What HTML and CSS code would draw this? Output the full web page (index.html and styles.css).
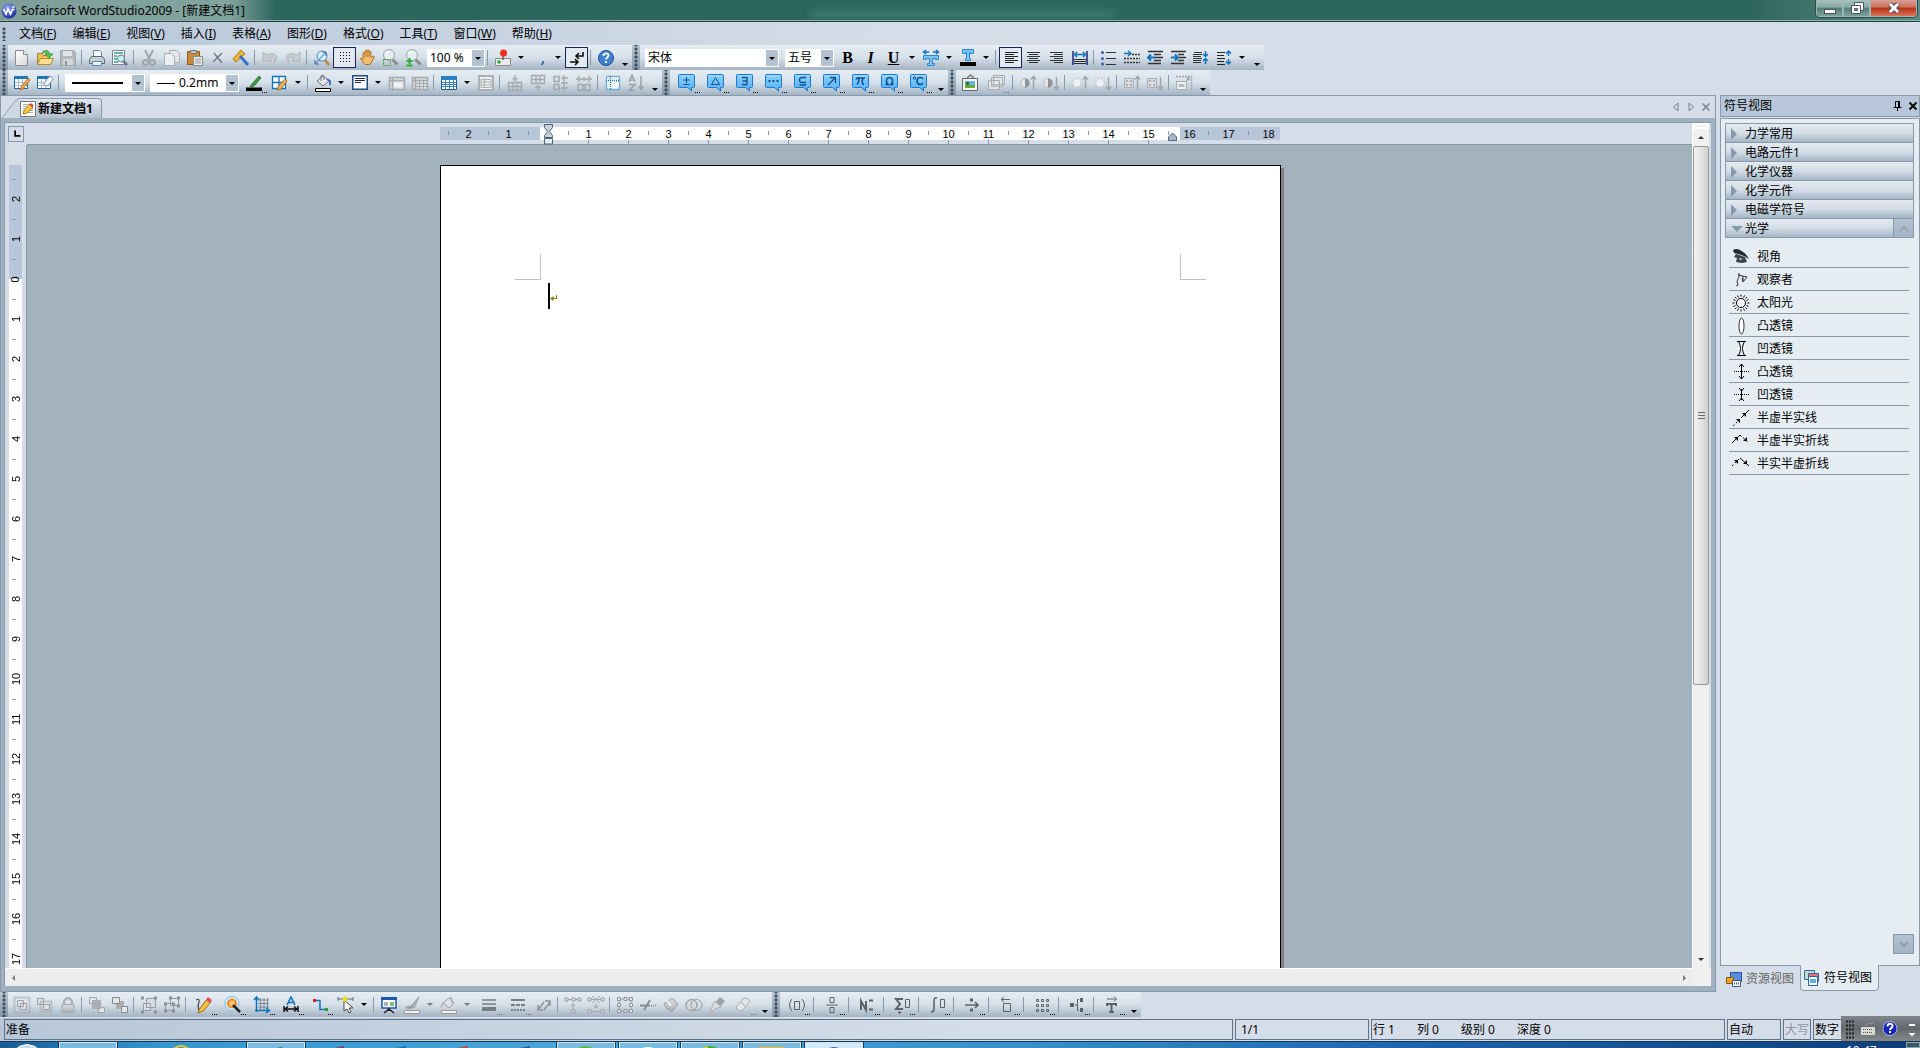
FILE: index.html
```html
<!DOCTYPE html>
<html lang="zh-CN">
<head>
<meta charset="utf-8">
<title>Sofairsoft WordStudio2009 - [新建文档1]</title>
<link rel="stylesheet" href="styles.css">
</head>
<body>
<svg class="sprite" aria-hidden="true">
  <defs>
    <linearGradient id="g-blue" x1="0" y1="0" x2="0" y2="1"><stop offset="0" stop-color="#8ad0fd"/><stop offset="1" stop-color="#55b0f6"/></linearGradient>
    <linearGradient id="g-paper" x1="0" y1="0" x2="1" y2="1"><stop offset="0" stop-color="#fff"/><stop offset="1" stop-color="#d9d9d9"/></linearGradient>
    <linearGradient id="g-gray" x1="0" y1="0" x2="0" y2="1"><stop offset="0" stop-color="#dcdfe2"/><stop offset="1" stop-color="#a9aeb3"/></linearGradient>
    <radialGradient id="g-orb" cx=".4" cy=".3" r=".7"><stop offset="0" stop-color="#9aaef0"/><stop offset="1" stop-color="#1c2c9c"/></radialGradient>
  </defs>
  <symbol id="callout" viewBox="0 0 18 18"><path d="M1.500.500h14a1 1 0 0 1 1 1v11a1 1 0 0 1-1 1h-2v3.500l-4-3.500h-8a1 1 0 0 1-1-1v-11a1 1 0 0 1 1-1z" fill="url(#g-blue)" stroke="#1f78d0"/><path d="M2 2h13" stroke="#a5dafd"/></symbol>
  <symbol id="lens" viewBox="0 0 18 18"><path d="M10.500 10.500l5 5" stroke="#8a8a8a" stroke-width="3"/><circle cx="7" cy="6" r="5.500" fill="#e4eef2" stroke="#9aa4aa"/><path d="M4 5a3 3 0 0 1 3-2.500" stroke="#fff" stroke-width="1.500"/></symbol>
  <symbol id="gsheet" viewBox="0 0 18 18"><path d="M1.500 3.500h15v12h-15zM1.500 6.500h15M4.500 3.500v12" fill="#dfe2e4" stroke="#a4a9ad" stroke-width="1.500"/></symbol>
  <symbol id="sheet" viewBox="0 0 18 18"><path d="M1.500 2.500h13v12h-13z" fill="#fff" stroke="#1d6a9e"/><path d="M1 2h14v3H1z" fill="#1d78b4"/><path d="M2 8.500h12M2 11.500h12M5.500 5v9M9.500 5v9" stroke="#a7bfd4"/></symbol>
  <symbol id="updn-up" viewBox="0 0 18 18"><path d="M14.500 15V3M12 5.500l2.500-3 2.500 3" stroke="#9ea5ab" stroke-width="1.500"/></symbol>
  <symbol id="updn-dn" viewBox="0 0 18 18"><path d="M14.500 3v12M12 12.500l2.500 3 2.500-3" stroke="#9ea5ab" stroke-width="1.500"/></symbol>
</svg>

<header class="titlebar">
  <svg class="logo" viewBox="0 0 16 16"><circle cx="8" cy="8" r="7.500" fill="url(#g-orb)"/><path d="M2.500 6l2.500 5 2-5 2.500 5 2-5M11 4h2.500M11 6.500h2.500" stroke="#fff" stroke-width="1.600"/></svg>
  <h1>Sofairsoft WordStudio2009 - [新建文档1]</h1>
  <div class="haze"></div>
  <div class="winbtns">
    <button aria-label="最小化"><svg viewBox="0 0 18 14"><rect x="3.500" y="8.500" width="11" height="4" fill="#fff" stroke="#4a5560"/></svg></button>
    <button aria-label="还原"><svg viewBox="0 0 18 14"><path d="M6.500 1.500h9v8h-9z" fill="#fff" stroke="#4a5560"/><path d="M3.500 4.500h9v8h-9z" fill="#fff" stroke="#4a5560"/><path d="M6.500 7.500h3v2h-3z" fill="#8aa" stroke="#4a5560"/></svg></button>
    <button class="close" aria-label="关闭"><svg viewBox="0 0 18 14"><path d="M5 3l8 8M13 3l-8 8" stroke="#4a4a55" stroke-width="5"/><path d="M5 3l8 8M13 3l-8 8" stroke="#fff" stroke-width="3"/></svg></button>
  </div>
</header>

<nav class="menubar">
  <i class="grip"></i>
  <a href="#">文档(<u>F</u>)</a><a href="#">编辑(<u>E</u>)</a><a href="#">视图(<u>V</u>)</a><a href="#">插入(<u>I</u>)</a><a href="#">表格(<u>A</u>)</a><a href="#">图形(<u>D</u>)</a><a href="#">格式(<u>O</u>)</a><a href="#">工具(<u>T</u>)</a><a href="#">窗口(<u>W</u>)</a><a href="#">帮助(<u>H</u>)</a>
</nav>

<div class="toolrow">
  <div class="bar"><i class="grip"></i>
    <button aria-label="新建"><svg viewBox="0 0 18 18"><path d="M2.500 1.500h8l4 4v11h-12z" fill="url(#g-paper)" stroke="#8b8b8b"/><path d="M10.500 1.500v4h4" fill="#eee" stroke="#8b8b8b"/></svg></button>
    <button aria-label="打开"><svg viewBox="0 0 18 18"><path d="M1.500 15.500v-11h5l1 2h6v9z" fill="#e9bd5a" stroke="#a87f28"/><path d="M1.500 15.500l3-6h13l-3 6z" fill="#fbe093" stroke="#b88c30"/><path d="M6 4c2-4 7-3 8 1h3l-4 4-4-4h2c-1-2-3-2-5-1z" fill="#5cc04a" stroke="#2f8f2c" stroke-width=".7"/></svg></button>
    <button aria-label="保存"><svg viewBox="0 0 18 18"><path d="M1.500 1.500h13l2 2v13h-15z" fill="#b4b8bb" stroke="#a2a6a9"/><path d="M4 2h9v5H4z" fill="#e2e4e6"/><path d="M4 10h10v6H4z" fill="#d5d8da"/><path d="M6 12h2v4H6z" fill="#8e9295"/></svg></button>
    <i class="sep"></i>
    <button aria-label="打印"><svg viewBox="0 0 18 18"><path d="M5.500 1.500h6l2 2v6h-8z" fill="#fff" stroke="#5a87c0"/><path d="M3.500 7.500h11l2 3v4h-15v-4z" fill="#c9ced3" stroke="#5e6870"/><path d="M4.500 12.500h9v4h-9z" fill="#eef6ff" stroke="#5a87c0"/></svg></button>
    <button aria-label="打印预览"><svg viewBox="0 0 18 18"><path d="M1.500 1.500h12v14h-12z" fill="#fff" stroke="#7b8794"/><path d="M3 4h9M3 7h3M3 10h3M3 13h4" stroke="#2f9a94" stroke-width="1.500"/><path d="M12 12l4 4" stroke="#6c6f94" stroke-width="2.500"/><circle cx="10" cy="9.500" r="3.500" fill="#c9ecf8" stroke="#6c7a88"/></svg></button>
    <i class="sep"></i>
    <button aria-label="剪切"><svg viewBox="0 0 18 18"><path d="M5 1l5 10M13 1L8 11" stroke="#a0a5a9" stroke-width="2"/><circle cx="5.500" cy="13.500" r="2.500" stroke="#a0a5a9" stroke-width="2"/><circle cx="12.500" cy="13.500" r="2.500" stroke="#a0a5a9" stroke-width="2"/></svg></button>
    <button aria-label="复制"><svg viewBox="0 0 18 18"><path d="M6.500 1.500h7l3 3v9h-10z" fill="#e4e6e8" stroke="#abb0b4"/><path d="M1.500 4.500h7l3 3v9h-10z" fill="#eceeef" stroke="#abb0b4"/></svg></button>
    <button aria-label="粘贴"><svg viewBox="0 0 18 18"><path d="M1.500 2.500h12v13h-12z" fill="#c98a3a" stroke="#8f5d1d"/><path d="M4.500 1.500h6v3h-6z" fill="#c8c8c8" stroke="#777"/><path d="M7.500 7.500h9v9h-9z" fill="#eee" stroke="#888"/><path d="M9 10h6M9 12h6M9 14h6" stroke="#999"/></svg></button>
    <button aria-label="删除"><svg viewBox="0 0 18 18"><path d="M5 4l8 10M13 4L4 13" stroke="#777d82" stroke-width="1.500"/></svg></button>
    <button aria-label="格式刷"><svg viewBox="0 0 18 18"><path d="M1 10L9 1l4 4-9 8z" fill="#f0b53a" stroke="#b37a10"/><path d="M8 7l8 9" stroke="#3c6fc4" stroke-width="3"/></svg></button>
    <i class="sep"></i>
    <button aria-label="撤销"><svg viewBox="0 0 18 18"><path d="M2 3v9h9l-3-3c3-2 6-1 5 5 6-6 1-12-8-8z" fill="#c8ccce" stroke="#b0b4b7"/></svg></button>
    <button aria-label="重做"><svg viewBox="0 0 18 18"><path d="M16 3v9H7l3-3c-3-2-6-1-5 5-6-6-1-12 8-8z" fill="#c8ccce" stroke="#b0b4b7"/></svg></button>
    <i class="sep"></i>
    <button aria-label="绘图"><svg viewBox="0 0 18 18"><circle cx="9" cy="7" r="5" fill="#d5ecfa" stroke="#4d8cc4"/><path d="M2 15L13 3M13 3h-4M13 3v4M2 15h4M2 15v-4" stroke="#2e6da4"/><path d="M12 11l4 5" stroke="#c58033" stroke-width="2.500"/></svg></button>
    <button class="on" aria-label="网格"><svg viewBox="0 0 18 18"><path d="M4 3.500h11M4 6.500h11M4 9.500h11M4 12.500h11" stroke="#111" stroke-dasharray="1 2"/></svg></button>
    <button aria-label="平移"><svg viewBox="0 0 18 18"><path d="M4 10V4q1-1.500 2 0V2q1-1.500 2 0V1.500q1-1.500 2 0V3q1-1.500 2 0v6l2-2q2 0 1 2l-4 6.500H6L1.500 10q0-2 2.500 0z" fill="#f5bd6b" stroke="#b0702a"/><path d="M6 4v4M8 2v6M10 3v5" stroke="#b0702a"/></svg></button>
    <button aria-label="框选缩放"><svg viewBox="0 0 18 18"><use href="#lens"/><path d="M1.500 10.500h7v6h-7z" stroke="#3f9a3f" stroke-dasharray="2 1"/></svg></button>
    <button aria-label="缩放"><svg viewBox="0 0 18 18"><use href="#lens"/><path d="M4.500 9v6M1.500 12h6M1.500 16.500h6" stroke="#2fae2f" stroke-width="2"/></svg></button>
    <label class="combo zoom"><select aria-label="缩放比例"><option>100 %</option></select></label>
    <i class="sep"></i>
    <button aria-label="图章"><svg viewBox="0 0 18 18"><path d="M1.500 9.500h15v7h-15z" fill="#ececec" stroke="#8b8b8b"/><path d="M9 7v4" stroke="#777" stroke-width="2"/><circle cx="9.500" cy="4" r="3.500" fill="#ee2d1c"/><path d="M3 13h4M5 11v4" stroke="#3aa63a" stroke-width="1.500"/></svg></button>
    <button class="drop" aria-label="图章选项"></button>
    <button aria-label="标点"><svg viewBox="0 0 18 18"><path d="M12 12v2l-1.500 2" stroke="#1b5f9c" stroke-width="1.500"/></svg></button>
    <button class="drop" aria-label="标点选项"></button>
    <button class="on" aria-label="显示段落标记"><svg viewBox="0 0 18 18"><path d="M15 3v4H8M11 4L8 7l3 3M2 13h7M7 10l3 3-3 3" stroke="#111" stroke-width="1.600"/></svg></button>
    <i class="sep"></i>
    <button aria-label="帮助"><svg viewBox="0 0 18 18"><circle cx="9" cy="9" r="7.500" fill="#3f7fd0" stroke="#205298"/><path d="M6.500 7c0-3.500 5-3.500 5-.500 0 2-2.500 2-2.500 4M9 12v2" stroke="#fff" stroke-width="1.800"/></svg></button>
    <button class="more" aria-label="工具栏选项"></button>
  </div>
  <div class="bar"><i class="grip"></i>
    <label class="combo font"><select aria-label="字体"><option>宋体</option></select></label>
    <label class="combo size"><select aria-label="字号"><option>五号</option></select></label>
    <button class="glyph" aria-label="加粗"><b>B</b></button>
    <button class="glyph" aria-label="倾斜"><b><em>I</em></b></button>
    <button class="glyph" aria-label="下划线"><b><u>U</u></b></button>
    <button class="drop" aria-label="下划线选项"></button>
    <button class="wide" aria-label="字符宽度"><svg viewBox="0 0 18 18"><path d="M1 3h6M11 3h6M4 1L1.500 3 4 5M14 1l2.500 2L14 5" stroke="#1173bd" stroke-width="1.500"/><path d="M1.500 6.500h15v4h-3v-1h-3v5h2v2h-7v-2h2v-5h-3v1h-3z" fill="#7cc4f4" stroke="#2d87cf"/></svg></button>
    <button class="drop" aria-label="字符宽度选项"></button>
    <button aria-label="字体颜色"><svg viewBox="0 0 18 18"><path d="M3.500.500h11v4h-3v-1h-1v6h1v2h-5v-2h1v-6h-1v1h-3z" fill="#7cc4f4" stroke="#2d87cf"/><path d="M1 13h16v4H1z" fill="#000"/></svg></button>
    <button class="drop" aria-label="颜色选项"></button>
    <i class="sep"></i>
    <button class="on" aria-label="左对齐"><svg viewBox="0 0 18 18"><path d="M3 3.500h13M3 5.500h9M3 7.500h13M3 9.500h9M3 11.500h13M3 13.500h9" stroke="#222"/></svg></button>
    <button aria-label="居中"><svg viewBox="0 0 18 18"><path d="M2 3.500h13M4 5.500h9M2 7.500h13M4 9.500h9M2 11.500h13M4 13.500h9" stroke="#333"/></svg></button>
    <button aria-label="右对齐"><svg viewBox="0 0 18 18"><path d="M2 3.500h13M6 5.500h9M2 7.500h13M6 9.500h9M2 11.500h13M6 13.500h9" stroke="#333"/></svg></button>
    <button aria-label="分散对齐"><svg viewBox="0 0 18 18"><path d="M2 2v14M16 2v14" stroke="#1b2a80" stroke-width="1.500"/><path d="M3 5.500h12M6 3L3.500 5.500 6 8M12 3l2.500 2.500L12 8" stroke="#1173bd" stroke-width="1.500"/><path d="M3 10.500h12M3 12.500h12M3 14.500h12" stroke="#333"/></svg></button>
    <i class="sep"></i>
    <button aria-label="项目符号"><svg viewBox="0 0 18 18"><path d="M6 3.500h10M6 9.500h10M6 15.500h10" stroke="#333"/><g fill="#3d5ba9"><circle cx="2.500" cy="3.500" r="1.500"/><circle cx="2.500" cy="9.500" r="1.500"/><circle cx="2.500" cy="15" r="1.500"/></g></svg></button>
    <button aria-label="首行缩进"><svg viewBox="0 0 18 18"><path d="M1 4.500h7M5 2l3 2.500L5 7" stroke="#1173bd" stroke-width="1.500"/><path d="M9 5.500h8M1 9.500h16M1 13.500h16" stroke="#333" stroke-width="1.500" stroke-dasharray="2 1"/></svg></button>
    <button aria-label="减少缩进"><svg viewBox="0 0 18 18"><path d="M2 2.500h15M8 5.500h7M9 8.500h8M8 11.500h7M2 14.500h13" stroke="#333" stroke-width="1.300"/><path d="M2 8.500h7M5 5.500l-3 3 3 3" stroke="#1173bd" stroke-width="2"/></svg></button>
    <button aria-label="增加缩进"><svg viewBox="0 0 18 18"><path d="M2 2.500h15M9 5.500h6M10 8.500h7M9 11.500h6M2 14.500h13" stroke="#333" stroke-width="1.300"/><path d="M2 8.500h7M6 5.500l3 3-3 3" stroke="#1173bd" stroke-width="2"/></svg></button>
    <button aria-label="段前距"><svg viewBox="0 0 18 18"><path d="M2 3.500h8M1 5.500h9M1 7.500h8M1 9.500h9M1 11.500h8M1 13.500h8" stroke="#333"/><path d="M13.500 2v5M11 5l2.500 2.500L16 5M13.500 15v-5M11 12l2.500-2.500L16 12" stroke="#1173bd" stroke-width="1.500"/></svg></button>
    <button aria-label="行距"><svg viewBox="0 0 18 18"><path d="M2 3.500h8M2 6.500h7M2 9.500h8M2 12.500h7M2 15.500h8" stroke="#222"/><path d="M13.500 7V2M11 4.500L13.500 2 16 4.500M13.500 10v5M11 12.500l2.500 2.500 2.500-2.500" stroke="#1173bd" stroke-width="1.500"/></svg></button>
    <button class="drop" aria-label="行距选项"></button>
    <button class="more" aria-label="工具栏选项"></button>
  </div>
</div>

<div class="toolrow second">
  <div class="bar"><i class="grip"></i>
    <button aria-label="绘制表格"><svg viewBox="0 0 18 18"><use href="#sheet"/><path d="M8 13l7-9 2 2-7 9-3 1z" fill="#f6a948" stroke="#a85b19" stroke-width=".8"/></svg></button>
    <button aria-label="擦除表格"><svg viewBox="0 0 18 18"><use href="#sheet"/><path d="M8 9l6-7 3.500 3-6 7q-4 0-3.500-3z" fill="#eef1f8" stroke="#7f8db0"/></svg></button>
    <i class="sep"></i>
    <label class="combo line"><select aria-label="线型"><option></option></select></label>
    <label class="combo weight"><select aria-label="线宽"><option>0.2mm</option></select></label>
    <button class="dots" aria-label="线条颜色"><svg viewBox="0 0 18 18"><path d="M7 10l7-8 2 2-7 8-4 1z" fill="#3da040" stroke="#235e25" stroke-width=".8"/><path d="M1 13.500h16v3.500H1z" fill="#000"/></svg></button>
    <button aria-label="边框"><svg viewBox="0 0 18 18"><path d="M1.500 2.500h13v12h-13zM8 2v12M2 8.500h12" fill="#fff" stroke="#1173bd" stroke-width="1.300"/><path d="M7 13l7-8 2 2-6 8-4 1z" fill="#f4b04c" stroke="#a85b19" stroke-width=".8"/></svg></button>
    <button class="drop" aria-label="边框选项"></button>
    <i class="sep"></i>
    <button aria-label="填充颜色"><svg viewBox="0 0 18 18"><path d="M3 7l6-5 6 5-6 5z" fill="#e6e9ec" stroke="#6e757c"/><path d="M7 7V2q1.500-2 3 0v4" stroke="#6e757c"/><path d="M13 5l3 2v4" stroke="#4a6fc0" stroke-width="2"/><path d="M1.500 14.500h15v3h-15z" fill="#fff" stroke="#000"/></svg></button>
    <button class="drop" aria-label="填充选项"></button>
    <button aria-label="对齐方式"><svg viewBox="0 0 18 18"><path d="M1.750 1.750h14.500v13.500H1.750z" fill="#fff" stroke="#1c4e7e" stroke-width="1.500"/><path d="M4 4.500h10M4 6.500h10M4 8.500h6" stroke="#224"/></svg></button>
    <button class="drop" aria-label="对齐选项"></button>
    <button aria-label="合并单元格"><svg viewBox="0 0 18 18"><use href="#gsheet"/><path d="M6 9h8v4H6z" fill="#f2f3f4"/></svg></button>
    <button aria-label="拆分单元格"><svg viewBox="0 0 18 18"><use href="#gsheet"/><path d="M5 9.500h11M5 12.500h11M8.500 7v8M12.500 7v8" stroke="#a4a9ad"/></svg></button>
    <i class="sep"></i>
    <button aria-label="插入表格"><svg viewBox="0 0 18 18"><path d="M1.500 2.500h15v13h-15z" fill="#fff" stroke="#1b5c9e"/><path d="M1 2h16v4H1z" fill="#2d7fc4"/><path d="M2 8.500h14M2 10.500h14M2 12.500h14M5.500 6v9M9.500 6v9M13.500 6v9" stroke="#3c80c0"/></svg></button>
    <button class="drop" aria-label="表格选项"></button>
    <button aria-label="表格属性"><svg viewBox="0 0 18 18"><path d="M2 2h14v14H2z" fill="#eceef0" stroke="#abb0b4" stroke-width="2"/><path d="M4 5.500h10v8H4zM4 8h10M4 11h10M7.500 5v8" stroke="#b0b4b8"/></svg></button>
    <i class="sep"></i>
    <button aria-label="上方插入行"><svg viewBox="0 0 18 18"><path d="M9 1v5M6.500 4L9 6.500 11.500 4M2.500 8.500h13v8h-13zM2 12.500h13M7 8v8M11 8v8" stroke="#a4a9ad" stroke-width="1.300"/></svg></button>
    <button aria-label="下方插入行"><svg viewBox="0 0 18 18"><path d="M9 17v-5M6.500 14L9 11.500l2.500 2.500M2.500 1.500h13v8h-13zM2 5.500h13M7 2v8M11 2v8" stroke="#a4a9ad" stroke-width="1.300"/></svg></button>
    <button aria-label="左侧插入列"><svg viewBox="0 0 18 18"><path d="M2 2.500h5v5H2zM2 10.500h5v5H2zM12 1v16M9 4h7M9 14h7M9 9h7" stroke="#a4a9ad" stroke-width="1.500"/></svg></button>
    <button aria-label="右侧插入列"><svg viewBox="0 0 18 18"><path d="M3 10.500h5v6H3zM10 10.500h5v6h-5zM1 5h16M4 2v6M14 2v6M9 3v4" stroke="#a4a9ad" stroke-width="1.500"/></svg></button>
    <i class="sep"></i>
    <button aria-label="虚框"><svg viewBox="0 0 18 18"><path d="M2.500 2.500h13v13h-13zM6.500 2v14M2 6.500h14" fill="#f4f9fc" stroke="#1173bd" stroke-width="1.300" stroke-dasharray="1 1"/></svg></button>
    <button aria-label="排序"><svg viewBox="0 0 18 18"><path d="M2 8l3-7 3 7M3 6h4M2 10.500h6l-6 6h6M14 2v13M11.500 12.500l2.500 3 2.500-3" stroke="#9ba0a4" stroke-width="1.500"/></svg></button>
    <button class="more" aria-label="工具栏选项"></button>
  </div>
  <div class="bar"><i class="grip"></i>
    <button class="dots" aria-label="运算符"><svg viewBox="0 0 18 18"><use href="#callout"/><path d="M8.500 3v6M5.500 6h6M5.500 10.500h6" stroke="#12508c"/></svg></button>
    <button class="dots" aria-label="几何"><svg viewBox="0 0 18 18"><use href="#callout"/><path d="M8.500 3.500l4 7h-8z" stroke="#12508c"/></svg></button>
    <button class="dots" aria-label="逻辑"><svg viewBox="0 0 18 18"><use href="#callout"/><path d="M6 3.500h5v7H6M6.500 7H11" stroke="#12508c" stroke-width="1.300"/></svg></button>
    <button class="dots" aria-label="省略"><svg viewBox="0 0 18 18"><use href="#callout"/><path d="M3.500 7h11" stroke="#12508c" stroke-width="2" stroke-dasharray="2 2"/></svg></button>
    <button class="dots" aria-label="集合"><svg viewBox="0 0 18 18"><use href="#callout"/><path d="M12 3.500H8a2.500 2.500 0 0 0 0 5h4M5.500 11H12" stroke="#12508c" stroke-width="1.300"/></svg></button>
    <button class="dots" aria-label="箭头"><svg viewBox="0 0 18 18"><use href="#callout"/><path d="M5 11l7-7M7 3.500h5.500V9" stroke="#12508c" stroke-width="1.300"/></svg></button>
    <button class="dots" aria-label="希腊字母"><svg viewBox="0 0 18 18"><use href="#callout"/><path d="M4 5.500q1-2 3-1.500h6M7 4.500q0 4-2 6M11 4q-2 6 1 6.500" stroke="#12508c" stroke-width="1.600"/></svg></button>
    <button class="dots" aria-label="单位"><svg viewBox="0 0 18 18"><use href="#callout"/><path d="M4.500 10.500h2.500c-3-3-1.500-7 1.500-7s4.500 4 1.500 7h2.500" stroke="#12508c" stroke-width="1.500"/></svg></button>
    <button class="dots" aria-label="温度"><svg viewBox="0 0 18 18"><use href="#callout"/><circle cx="4.500" cy="4" r="1.200" stroke="#12508c"/><path d="M13 5c-1-2.500-6-2-6 2s5 4.500 6 2" stroke="#12508c" stroke-width="1.500"/></svg></button>
    <button class="more" aria-label="工具栏选项"></button>
  </div>
  <div class="bar"><i class="grip"></i>
    <button aria-label="插入图片"><svg viewBox="0 0 18 18"><path d="M6 4l3.500-3L13 4" stroke="#777" stroke-width="1.500"/><path d="M1.500 4.500h15v12h-15z" fill="#f5f5f0" stroke="#666"/><path d="M4 7h10v5H4z" fill="#64b5ea"/><path d="M4 11h10v3H4z" fill="#6aa83a"/><circle cx="6.500" cy="9.500" r="1.800" fill="#2f7030"/></svg></button>
    <button class="dots off" aria-label="图片库"><svg viewBox="0 0 18 18"><path d="M6.500 1.500h11v9h-11zM4.500 3.500h11v9h-11zM1.500 6.500h11v9h-11z" fill="#e3e6e8" stroke="#a6abaf"/><path d="M4 10h6v3H4z" fill="#bbb"/></svg></button>
    <i class="sep"></i>
    <button aria-label="增加对比度"><svg viewBox="0 0 18 18"><use href="#updn-up"/><circle cx="6" cy="9" r="4.500" fill="#e4e6e8" stroke="#b5b9bc"/><path d="M6 4.500a4.500 4.500 0 0 1 0 9z" fill="#8f9498"/></svg></button>
    <button aria-label="降低对比度"><svg viewBox="0 0 18 18"><use href="#updn-dn"/><circle cx="6" cy="9" r="4.500" fill="#e4e6e8" stroke="#b5b9bc"/><path d="M6 4.500a4.500 4.500 0 0 1 0 9z" fill="#8f9498"/></svg></button>
    <i class="sep"></i>
    <button aria-label="增加亮度"><svg viewBox="0 0 18 18"><use href="#updn-up"/><circle cx="6" cy="9" r="5" stroke="#c2c8cc" stroke-width="2" stroke-dasharray="1 2"/><circle cx="6" cy="9" r="3.500" fill="#f0f1f2"/></svg></button>
    <button aria-label="降低亮度"><svg viewBox="0 0 18 18"><use href="#updn-dn"/><circle cx="6" cy="9" r="5" stroke="#c2c8cc" stroke-width="2" stroke-dasharray="1 2"/><circle cx="6" cy="9" r="3.500" fill="#f0f1f2"/></svg></button>
    <i class="sep"></i>
    <button aria-label="增加透明度"><svg viewBox="0 0 18 18"><use href="#updn-up"/><path d="M1.500 4.500h9v9h-9z" fill="#dcdfe1" stroke="#a9aeb2"/><path d="M3 7h7M3 11h7" stroke="#a9aeb2" stroke-width="2" stroke-dasharray="2 2"/></svg></button>
    <button aria-label="降低透明度"><svg viewBox="0 0 18 18"><use href="#updn-dn"/><path d="M1.500 4.500h9v9h-9z" fill="#dcdfe1" stroke="#a9aeb2"/><path d="M3 7h7M3 11h7" stroke="#a9aeb2" stroke-width="2" stroke-dasharray="2 2"/></svg></button>
    <i class="sep"></i>
    <button aria-label="调整大小"><svg viewBox="0 0 18 18"><path d="M1 2.500h15.500V16" stroke="#a0a5a9" stroke-width="1.500" stroke-dasharray="2 1"/><path d="M1.500 7.500h10v8h-10z" fill="#f0f1f2" stroke="#a6abaf"/><path d="M3.500 10h6v3h-6z" fill="#bbb"/><path d="M11 7l3-3M11.500 4H14v2.500" stroke="#8d9296"/></svg></button>
    <button class="more" aria-label="工具栏选项"></button>
  </div>
</div>

<main class="work">
  <section class="editor">
    <div class="tabs">
      <svg class="slope" viewBox="0 0 20 22" preserveAspectRatio="none"><path d="M0 22L14 4Q17 .500 20 .500V22z" fill="#cdd8e2"/><path d="M0 22L14 4Q17 .500 20 .500" stroke="#8799ab"/></svg>
      <button class="tab"><svg viewBox="0 0 16 16"><path d="M.500.500h15v15H.500z" fill="#fff" stroke="#777"/><path d="M3 3.500h10M3 5.500h10M3 7.500h10M3 9.500h10M3 11.500h10" stroke="#aaa"/><path d="M4 10l6-7 3 3-6 6-4 1z" fill="#fbd038" stroke="#b27a10"/><path d="M9 3.500l2-1.500 2.500 2.500L12 6z" fill="#e23b3b"/></svg>新建文档1</button>
      <div class="tabnav">
        <button aria-label="上一个"><svg viewBox="0 0 10 10"><path d="M7 1v8L2.500 5z" stroke="#7a8087"/></svg></button>
        <button aria-label="下一个"><svg viewBox="0 0 10 10"><path d="M3 1v8l4.500-4z" stroke="#7a8087"/></svg></button>
        <button aria-label="关闭文档"><svg viewBox="0 0 10 10"><path d="M1.500 1.500l7 7M8.500 1.500l-7 7" stroke="#7a8087" stroke-width="1.500"/></svg></button>
      </div>
    </div>
    <div class="view">
      <div class="corner"><button aria-label="制表符"><svg viewBox="0 0 16 16"><path d="M7 4v6h6" stroke="#000" stroke-width="2"/></svg></button></div>
      <div class="hruler">
        <div class="scale">
          <div class="out left"><span>2</span><span>1</span><span></span></div>
          <div class="in"><span>1</span><span>2</span><span>3</span><span>4</span><span>5</span><span>6</span><span>7</span><span>8</span><span>9</span><span>10</span><span>11</span><span>12</span><span>13</span><span>14</span><span>15</span><span class="part"></span></div>
          <div class="out right"><span>16</span><span>17</span><span>18</span></div>
          <svg class="indent" viewBox="0 0 10 21"><path d="M.500.500h8v3l-3 4 3 4v2h-8v-2l3-4-3-4z" fill="#c3cfda" stroke="#4f6578"/><path d="M.500 14.500h8v5.500h-8z" fill="#e5edf3" stroke="#4f6578"/></svg>
          <svg class="rindent" viewBox="0 0 10 9"><path d="M.500 8.500V5l4-4 4 4v3.500z" fill="#a9b8c6" stroke="#4f6578"/></svg>
        </div>
      </div>
      <div class="vruler">
        <div class="vout"><span>2</span><span>1</span><span class="stub"></span></div>
        <div class="vin"><b>0</b><span>1</span><span>2</span><span>3</span><span>4</span><span>5</span><span>6</span><span>7</span><span>8</span><span>9</span><span>10</span><span>11</span><span>12</span><span>13</span><span>14</span><span>15</span><span>16</span><span>17</span></div>
      </div>
      <div class="canvas">
        <article class="page">
          <div class="marks"><i class="ml"></i><i class="mr"></i></div>
          <div class="para"><i class="caret"></i><svg viewBox="0 0 8 8"><path d="M6.500 0v3.500H1" stroke="#808000"/><path d="M3.500 1v5L0 3.500z" fill="#808000"/></svg></div>
        </article>
      </div>
      <div class="vscroll"><i class="split"></i><button class="up" aria-label="向上滚动"></button><div class="thumb"></div><button class="down" aria-label="向下滚动"></button></div>
      <div class="hscroll"><button class="back" aria-label="向左滚动"></button><button class="fwd" aria-label="向右滚动"></button></div>
      <div class="nook"></div>
    </div>
  </section>

  <aside class="panel">
    <header><h2>符号视图</h2>
      <button aria-label="固定"><svg viewBox="0 0 10 10"><path d="M2.500 6V.500h4V6M.500 6.500h8M4.500 7v3" stroke="#000"/><path d="M6 0v6" stroke="#000" stroke-width="2"/></svg></button>
      <button aria-label="关闭面板"><svg viewBox="0 0 10 10"><path d="M1.500 1.500l7 7M8.500 1.500l-7 7" stroke="#000" stroke-width="1.800"/></svg></button>
    </header>
    <div class="pbody">
      <div class="groups">
        <button><i></i>力学常用</button>
        <button><i></i>电路元件1</button>
        <button><i></i>化学仪器</button>
        <button><i></i>化学元件</button>
        <button><i></i>电磁学符号</button>
        <div class="openrow"><button class="open"><i></i>光学</button><button class="step" aria-label="上移"><svg viewBox="0 0 12 8"><path d="M2 6l4-4 4 4" stroke="#9aa2ab" stroke-width="2"/></svg></button></div>
      </div>
      <ul class="symbols">
        <li><svg viewBox="0 0 18 18"><path d="M1 2q3-2 7 0 6 3 9 9l-5-3-6-2-4-1z" fill="#222b33"/><path d="M4 6l9 3 2 5-5 1-6-1 1-4-3-1z" fill="#3a444c"/><path d="M7 10l4 1-3 1z" fill="#e5edf3"/></svg>视角</li>
        <li><svg viewBox="0 0 18 18"><path d="M7 2v4l-2 4 1 4-2 1M6 4l9 2-4 5-1-4M11 5v5" stroke="#333"/></svg>观察者</li>
        <li><svg viewBox="0 0 18 18"><path d="M9 .500v2M9 15.500v2M.500 9h2M15.500 9h2M3 3l1.500 1.500M13.500 13.500L15 15M15 3l-1.500 1.500M4.500 13.500L3 15M5.500 1.500l1 2M12.500 1.500l-1 2M5.500 16.500l1-2M12.500 16.500l-1-2M1.500 5.500l2 1M16.500 5.500l-2 1M1.500 12.500l2-1M16.500 12.500l-2-1" stroke="#000"/><circle cx="9" cy="9" r="4.500" fill="#fff" stroke="#000"/></svg>太阳光</li>
        <li><svg viewBox="0 0 18 18"><ellipse cx="9.500" cy="9" rx="2.500" ry="8" fill="#fff" stroke="#333"/></svg>凸透镜</li>
        <li><svg viewBox="0 0 18 18"><path d="M5 1.500h9M5 15.500h9M6.500 1.500q4 7 0 14M12.500 1.500q-4 7 0 14" fill="#fff" stroke="#000"/></svg>凹透镜</li>
        <li><svg viewBox="0 0 18 18"><path d="M9.500 1v15M7 4l2.500-3L12 4M7 13l2.500 3 2.500-3" stroke="#000"/><path d="M2 8.500h15" stroke="#000" stroke-dasharray="1 1"/></svg>凸透镜</li>
        <li><svg viewBox="0 0 18 18"><path d="M9.500 3v11M7 2l2.500 3L12 2M7 15l2.500-3 2.500 3" stroke="#000"/><path d="M2 8.500h15" stroke="#000" stroke-dasharray="1 1"/></svg>凹透镜</li>
        <li><svg viewBox="0 0 18 18"><path d="M9 9l8-8" stroke="#000"/><path d="M1 17l8-8" stroke="#000" stroke-dasharray="2 2"/><path d="M10 4h4v4zM4 10h4v4z" fill="#000"/></svg>半虚半实线</li>
        <li><svg viewBox="0 0 18 18"><path d="M0 11l8-8" stroke="#000"/><path d="M8 3l9 8" stroke="#000" stroke-dasharray="2 2"/><path d="M2 5h4v4zM11 9h4V5z" fill="#000"/></svg>半虚半实折线</li>
        <li><svg viewBox="0 0 18 18"><path d="M0 11l8-8" stroke="#000" stroke-dasharray="2 2"/><path d="M8 3l9 8" stroke="#000"/><path d="M2 5h4v4zM11 9h4V5z" fill="#000"/></svg>半实半虚折线</li>
      </ul>
      <button class="step last" aria-label="下移"><svg viewBox="0 0 12 8"><path d="M2 2l4 4 4-4" stroke="#8f9ba7" stroke-width="2"/></svg></button>
    </div>
    <div class="ptabs">
      <button><svg viewBox="0 0 16 16"><path d="M4.500 1.500h11v9h-11z" fill="#5b8de0" stroke="#2b4f9a"/><path d="M.500 6.500h7v6h-7z" fill="#e9a51c" stroke="#8c5a10"/><path d="M6.500 9.500h8v6h-8z" fill="#fff" stroke="#44597c"/><path d="M8 12.500h6" stroke="#44597c" stroke-width="2" stroke-dasharray="1 1"/></svg>资源视图</button>
      <button class="sel"><svg viewBox="0 0 16 16"><path d="M.500.500h10v9H.500z" fill="#b9e0c0" stroke="#3a66a8"/><path d="M4.500 3.500h10v8h-10z" fill="#e67070" stroke="#3a66a8"/><path d="M4.500 6.500h9v9h-9z" fill="#fff" stroke="#2c5fa4"/><path d="M6 9h6v4H6z" fill="#5ab0e4"/></svg>符号视图</button>
    </div>
  </aside>
</main>

<div class="toolrow low">
  <div class="bar"><i class="grip"></i>
    <button aria-label="全选"><svg viewBox="0 0 18 18"><path d="M1.500 1.500h15v15h-15z" stroke="#a0a6ab" stroke-width="2" stroke-dasharray="1 1"/><path d="M4.500 4.500h6v6h-6zM7.500 7.500h6v6h-6z" fill="#dfe3e6" stroke="#9ba1a6"/></svg></button>
    <button aria-label="选择"><svg viewBox="0 0 18 18"><path d="M1.500 2.500h6v6h-6z" fill="#dfe3e6" stroke="#9ba1a6"/><path d="M4.500 5.500h11v10h-11z" stroke="#a0a6ab" stroke-width="2" stroke-dasharray="1 1"/><path d="M7.500 8.500h6v5h-6z" fill="#dfe3e6" stroke="#9ba1a6"/></svg></button>
    <button aria-label="锁定"><svg viewBox="0 0 18 18"><path d="M5 9V5q4-6 8 0v4" stroke="#a5abb0" stroke-width="2"/><path d="M3 8.500h12v8H3z" fill="url(#g-gray)" stroke="#a5abb0"/></svg></button>
    <i class="sep"></i>
    <button aria-label="置于顶层"><svg viewBox="0 0 18 18"><path d="M1.500 1.500h7v6h-7zM10.500 11.500h6v5h-6z" fill="#e3e6e8" stroke="#a0a6ab"/><path d="M4 4h9v9H4z" fill="#a9aeb3"/></svg></button>
    <button aria-label="置于底层"><svg viewBox="0 0 18 18"><path d="M5 5h8v8H5z" fill="#a9aeb3"/><path d="M1.500 1.500h7v6h-7zM10.500 10.500h6v6h-6z" fill="#e3e6e8" stroke="#858b90"/></svg></button>
    <i class="sep"></i>
    <button aria-label="组合"><svg viewBox="0 0 18 18"><path d="M6.500 2.500h9v9h-9zM3.500 7.500h7v7h-7z" fill="#d8dde1" stroke="#959ba0"/><path d="M1 2h3M1 16h3M14 16h3M14 2h3" stroke="#8b9196" stroke-width="3"/></svg></button>
    <button aria-label="取消组合"><svg viewBox="0 0 18 18"><path d="M7.500 2.500h8v7h-8zM2.500 7.500h8v7h-8z" stroke="#959ba0"/><path d="M6 2h3M14 2h3M1 8h3M9 8h3M14 10h3M1 15h3M9 15h3" stroke="#8b9196" stroke-width="3"/></svg></button>
    <i class="sep"></i>
    <button class="dots" aria-label="画笔"><svg viewBox="0 0 18 18"><path d="M1 4q4-2 3 2-2 4 0 8" stroke="#222"/><path d="M4 14l8-11 4 3-8 9-5 2z" fill="#f9c63c" stroke="#9a6410"/><path d="M11 4l2-3 4 3-2 3z" fill="#e2505c"/></svg></button>
    <button class="dots" aria-label="智能绘图"><svg viewBox="0 0 18 18"><circle cx="8" cy="7.500" r="7" fill="#dbeffb" stroke="#79bce6"/><circle cx="8" cy="7.500" r="4" fill="#ffc870" stroke="#ee8a1d" stroke-width="2"/><path d="M9 9l7 7" stroke="#222" stroke-width="2.500"/></svg></button>
    <button class="dots" aria-label="坐标"><svg viewBox="0 0 18 18"><path d="M5 4h11M5 7.500h11M5 11h11M7.500 2v12M11 2v12M14.500 2v12" stroke="#7d858d"/><path d="M3.500 16V2M1 4l2.500-3L6 4M2 14.500h14M13 12l3.500 2.500L13 17" stroke="#1173bd" stroke-width="1.500"/></svg></button>
    <button class="dots" aria-label="标注"><svg viewBox="0 0 18 18"><path d="M5 9l4-8 4 8M6 6.500h6" stroke="#1173bd" stroke-width="1.600"/><path d="M2 10v6M16 10v6M3 13h12M6 10.500L3 13l3 2.500M12 10.500l3 2.500-3 2.500" stroke="#111" stroke-width="1.500"/></svg></button>
    <button class="dots" aria-label="连线"><svg viewBox="0 0 18 18"><path d="M4 4.500h5v9h6" stroke="#1173bd" stroke-width="1.500"/><path d="M2 3h3v3H2z" fill="#d8201c"/><path d="M14 12h3v3h-3z" fill="#2a9a2e"/></svg></button>
    <button class="pick" aria-label="选取"><svg viewBox="0 0 18 18"><path d="M1 3h15M1 1v4M16 1v4" stroke="#667"/><path d="M7 4v11l3-2 2 4 2-1-2-4h4z" fill="#fff" stroke="#444"/><circle cx="8" cy="3" r="2.500" fill="#e6e610"/></svg></button>
    <button class="drop" aria-label="选取选项"></button>
    <i class="sep"></i>
    <button aria-label="演示"><svg viewBox="0 0 18 18"><path d="M2 2h14v10H2z" fill="#fff" stroke="#1c55b4" stroke-width="1.500"/><path d="M1 1h16v3H1z" fill="#1c55b4"/><path d="M4 7h4M4 9h4" stroke="#666"/><path d="M10 6h4v4h-4z" fill="#78c470"/><path d="M9 12v3M9 13l-5 4M9 13l5 4" stroke="#222" stroke-width="1.600"/></svg></button>
    <button aria-label="线条颜色"><svg viewBox="0 0 18 18"><path d="M8 10l8-9-5 11z" fill="#aab0b5" stroke="#979da2"/><path d="M2 12q2-3 6-2l2 2q-3 2-8 0z" fill="#9aa0a5"/><path d="M1.500 14.500h15v3h-15z" fill="#f7efe9" stroke="#999"/></svg></button>
    <button class="drop off" aria-label="线条选项"></button>
    <button aria-label="填充颜色"><svg viewBox="0 0 18 18"><path d="M3 7l6-5 5 5-5 5z" fill="#dee2e5" stroke="#9aa0a5"/><path d="M9 3q3-5 3 4M3 7l-2 4" stroke="#9aa0a5"/><path d="M1.500 14.500h15v3h-15z" fill="#f7efe9" stroke="#999"/></svg></button>
    <button class="drop off" aria-label="填充选项"></button>
    <button class="dots off" aria-label="线宽"><svg viewBox="0 0 18 18"><path d="M2 4h14M2 8h14" stroke="#777d82" stroke-width="1.500"/><path d="M2 13h14" stroke="#777d82" stroke-width="4"/></svg></button>
    <button class="dots off" aria-label="线型"><svg viewBox="0 0 18 18"><path d="M2 4h14" stroke="#777d82" stroke-width="2"/><path d="M2 9h14" stroke="#777d82" stroke-width="2" stroke-dasharray="4 1"/><path d="M2 14h14" stroke="#777d82" stroke-width="2" stroke-dasharray="2 1"/></svg></button>
    <button aria-label="箭头样式"><svg viewBox="0 0 18 18"><path d="M3 14l6-8M3 9v5h5M9 14l6-8M10 5h5v5" stroke="#8b9196" stroke-width="1.500"/></svg></button>
    <i class="sep"></i>
    <button aria-label="添加节点"><svg viewBox="0 0 18 18"><path d="M2 3.500h14M9 15V8M6.500 10L9 7.500l2.500 2.500" stroke="#a0a6ab"/><path d="M1 2h3v3H1zM8 2h3v3H8zM14 2h3v3h-3zM8 14h3v3H8z" fill="#e5e9ec" stroke="#999"/></svg></button>
    <button aria-label="删除节点"><svg viewBox="0 0 18 18"><path d="M2 3.500h14M5 0l8 7M13 0L5 7M9 7v5M6.500 9.500L9 12l2.500-2.500M2 15.500h14" stroke="#a0a6ab"/><path d="M1 2h3v3H1zM14 2h3v3h-3zM1 14h3v3H1zM14 14h3v3h-3z" fill="#e5e9ec" stroke="#999"/></svg></button>
    <i class="sep"></i>
    <button aria-label="编辑顶点"><svg viewBox="0 0 18 18"><path d="M3 3h12v12H3z" stroke="#a0a6ab"/><path d="M1.500 1.500h3v3h-3zM8 1.500h3v3H8zM13.500 1.500h3v3h-3zM1.500 7.500h3v3h-3zM13.500 7.500h3v3h-3zM1.500 13.500h3v3h-3zM8 13.500h3v3H8zM13.500 13.500h3v3h-3z" fill="#e5e9ec" stroke="#8f959a"/></svg></button>
    <button aria-label="断开"><svg viewBox="0 0 18 18"><path d="M1 9.500h10M5 14l6-10" stroke="#858b90" stroke-width="1.800"/><path d="M12 9.500h6" stroke="#858b90" stroke-width="1.500" stroke-dasharray="1 1"/></svg></button>
    <button aria-label="填充"><svg viewBox="0 0 18 18"><path d="M2 8l8-6 6 6-6 8-6-4z" fill="url(#g-gray)" stroke="#999fa4"/><path d="M4 3l5 7" stroke="#eee" stroke-width="2"/></svg></button>
    <button aria-label="相交"><svg viewBox="0 0 18 18"><circle cx="6.500" cy="9" r="5.500" fill="#d5d9dc" stroke="#999fa4"/><circle cx="11.500" cy="9" r="5.500" stroke="#999fa4"/><circle cx="6.500" cy="9" r="5.500" stroke="#999fa4"/></svg></button>
    <button aria-label="吸管"><svg viewBox="0 0 18 18"><path d="M8 6l4-5 5 4-4 5z" fill="#9ca2a7"/><path d="M7 5l6 6-6 2-5 4 2-6z" fill="#d9dde0" stroke="#a5abb0"/></svg></button>
    <button class="dots off" aria-label="橡皮"><svg viewBox="0 0 18 18"><path d="M2 11l8-9q3-1 6 3l-8 10q-4 1-6-4z" fill="#e4e7e9" stroke="#a5abb0"/><path d="M7 6l5 5" stroke="#a5abb0"/></svg></button>
    <button class="more" aria-label="工具栏选项"></button>
  </div>
  <div class="bar math"><i class="grip"></i>
    <button class="dots" aria-label="括号"><svg viewBox="0 0 18 18"><path d="M4 3q-5 6 0 12M14 3q5 6 0 12M6.500 5.500h5v8h-5z"/></svg></button><i class="sep"></i>
    <button class="dots" aria-label="分式"><svg viewBox="0 0 18 18"><path d="M7 1.500h4v5H7zM3 9h12M7 11.500h4v5H7z"/></svg></button><i class="sep"></i>
    <button class="dots" aria-label="上下标"><svg viewBox="0 0 18 18"><path d="M3 14V5l5 9V5" stroke-width="2"/><path d="M11 4.500h4M11 13.500h4" stroke-width="2"/></svg></button><i class="sep"></i>
    <button class="dots" aria-label="求和"><svg viewBox="0 0 18 18"><path d="M10 3H3l4 5-4 5h7M5 16.500h3" stroke-width="2"/><path d="M12.500 3.500h4v8h-4z"/></svg></button><i class="sep"></i>
    <button class="dots" aria-label="积分"><svg viewBox="0 0 18 18"><path d="M9 2q-3-1-3 3v8q0 3-3 3" stroke-width="1.600"/><path d="M12.500 3.500h4v8h-4z"/></svg></button><i class="sep"></i>
    <button class="dots" aria-label="反应箭头"><svg viewBox="0 0 18 18"><path d="M2 9h12M12 6l3 3-3 3" stroke-width="1.500"/><path d="M7 4h3M7 14h3" stroke-width="3"/></svg></button><i class="sep"></i>
    <button class="dots" aria-label="向量"><svg viewBox="0 0 18 18"><path d="M3 3.500h9M6 1L3 3.500 6 6M5.500 7.500h7v8h-7z"/></svg></button><i class="sep"></i>
    <button class="dots" aria-label="矩阵"><svg viewBox="0 0 18 18"><path d="M3.500 3.500h2v2h-2zM8.500 3.500h2v2h-2zM13.500 3.500h2v2h-2zM3.500 8.500h2v2h-2zM8.500 8.500h2v2h-2zM13.500 8.500h2v2h-2zM3.500 13.500h2v2h-2zM8.500 13.500h2v2h-2zM13.500 13.500h2v2h-2z"/></svg></button><i class="sep"></i>
    <button class="dots" aria-label="树形"><svg viewBox="0 0 18 18"><path d="M2 9h4" stroke-width="4"/><path d="M7 9h2M11 3.500H9.500v11H11"/><path d="M12 4h3M12 14h3" stroke-width="4"/></svg></button><i class="sep"></i>
    <button class="dots" aria-label="文字矢量"><svg viewBox="0 0 18 18"><path d="M4 3h9M11 .500L13.500 3 11 5.500"/><path d="M4 10V8h9v2M8.500 8v8M6 16h5" stroke-width="2"/></svg></button>
    <button class="more" aria-label="工具栏选项"></button>
  </div>
</div>

<footer class="status">
  <span class="msg">准备</span><span class="pages">1/1</span><span class="pos"><i>行 1</i><i>列 0</i><i>级别 0</i><i>深度 0</i></span><span class="auto">自动</span><span class="caps">大写</span><span class="num">数字</span>
  <div class="langbar">
    <svg viewBox="0 0 80 26"><path d="M5 5.500h8M5 9.500h8M5 13.500h8M5 17.500h8M5 21.500h8" stroke="#222" stroke-width="2" stroke-dasharray="2 1"/><path d="M20.500 11.500h13v7h-13z" fill="#d8d8d4" stroke="#d8d8d4"/><path d="M24 10q3-4 6-2l3-2" stroke="#999"/><path d="M22 13.500h10M22 16.500h10" stroke="#555" stroke-dasharray="1 1"/><circle cx="49" cy="12.500" r="7" fill="#1524b8" stroke="#aab4e8"/><path d="M46.500 10.500c0-3.500 5-3.500 5-.500 0 2-2.500 2-2.500 4M49 15v2" stroke="#fff" stroke-width="2"/><path d="M68 9h6" stroke="#fff" stroke-width="2"/><path d="M67.500 17h7L71 20.500z" fill="#fff"/></svg>
  </div>
</footer>

<footer class="taskbar">
  <svg class="start" viewBox="0 0 30 8"><path d="M1 8q14-13 28 0z" fill="#c6dce9" stroke="#fff"/></svg>
  <div class="tasks">
    <i class="lit t1"><svg viewBox="0 0 24 8"><path d="M2 6h14v2H2z" fill="#e6ca80"/></svg></i>
    <i class="t2"><svg viewBox="0 0 24 8"><path d="M2 8q9-8 18 0" stroke="#e8c63c" stroke-width="2"/></svg></i>
    <i class="lit t3"><svg viewBox="0 0 24 8"><path d="M2 7l16-3v4H2z" fill="#1f7244"/></svg></i>
    <i class="t4"><svg viewBox="0 0 24 8"><path d="M2 7l16-3v4H2z" fill="#80397b"/></svg></i>
    <i class="t4"><svg viewBox="0 0 24 8"><path d="M2 7l16-3v4H2z" fill="#0f6fc6"/></svg></i>
    <i class="t4"><svg viewBox="0 0 24 8"><path d="M2 7l16-3v4H2z" fill="#d04424"/></svg></i>
    <i class="t4"><svg viewBox="0 0 24 8"><path d="M2 7l16-3v4H2z" fill="#2b579a"/></svg></i>
    <i class="lit t5"><svg viewBox="0 0 24 8"><path d="M2 8q8-7 20 0" fill="#fff" stroke="#5cb83c" stroke-width="3"/></svg></i>
    <i class="lit t5"><svg viewBox="0 0 24 8"><path d="M2 8q10-8 20 0z" fill="#fff"/></svg></i>
    <i class="lit t5"><svg viewBox="0 0 24 8"><path d="M2 8q10-7 20 0" fill="#eee" stroke="#49a935" stroke-width="3"/><path d="M2 8q4-3 8-3" stroke="#f0cc1c" stroke-width="3"/></svg></i>
    <i class="lit t5"><svg viewBox="0 0 32 8"><path d="M1 8q0-4 4-4h21q4 0 4 4z" fill="#ffb81c"/></svg></i>
    <i class="lit t5 cur"><svg viewBox="0 0 24 8"><path d="M2 8q10-8 20 0z" fill="#4a5fd0"/></svg></i>
  </div>
  <time>10:47</time><i class="peek"></i>
</footer>
</body>
</html>
```
FILE: styles.css
```css
* { box-sizing: border-box; }
body {
  margin: 0;
  height: 100vh;
  overflow: hidden;
  display: flex;
  flex-direction: column;
  background: #d5dee8;
  color: #000;
  font: 12px/18px "Noto Sans", "Noto Sans CJK SC", sans-serif;
}
button, select { font: inherit; color: inherit; margin: 0; padding: 0; border: 0; background: none; }
h1, h2 { margin: 0; font: inherit; }
svg { display: block; fill: none; flex: none; }
i { font-style: normal; }
.sprite { position: absolute; width: 0; height: 0; }

.titlebar {
  flex: none;
  height: 22px;
  display: flex;
  align-items: center;
  padding: 0 1px;
  border-bottom: 1px solid #24433f;
  background: linear-gradient(90deg, #7fa09a, #82a49e 230px, #2d665e 275px, #2d665e 91%, #5d8a84);
  box-shadow: inset 0 -1px #8fb3ac;
}
.logo { width: 16px; height: 16px; margin-right: 4px; }
.haze {
  width: 304px;
  height: 6px;
  margin: 6px 0 0 557px;
  background: #407a72;
  filter: blur(3px);
}
.titlebar h1 { white-space: nowrap; flex: 0 0 232px; }
.winbtns {
  align-self: flex-start;
  display: flex;
  height: 18px;
  margin: 0 1px 0 auto;
  border: 1px solid #2d4a47;
  border-top: 0;
  border-radius: 0 0 5px 5px;
  overflow: hidden;
}
.winbtns button {
  width: 27px;
  display: flex;
  justify-content: center;
  align-items: center;
  border: 1px solid #9db8b4;
  border-top: 0;
  background: linear-gradient(#a9c1bd, #86a8a3 45%, #557d78 50%, #7ba39c);
}
.winbtns svg { width: 18px; height: 14px; }
.winbtns .close { width: 47px; background: linear-gradient(#d9a196, #c9705c 45%, #b5301a 50%, #dd7357); }

.menubar {
  flex: none;
  height: 23px;
  display: flex;
  align-items: center;
  background: linear-gradient(90deg, #b7c7d9, #d5dee8 900px);
}
.menubar a { color: #000; text-decoration: none; margin-left: 16px; white-space: nowrap; }

.grip {
  flex: none;
  width: 8px;
  height: 100%;
  background: radial-gradient(circle, #3d4c5a 1px, transparent 2px) 2px 6px / 4px 4px repeat-y, linear-gradient(#b9c6d2, #8496a7);
  background-size: 4px 4px, 100% 100%;
  background-repeat: repeat-y, no-repeat;
}
.menubar .grip { background: radial-gradient(circle, #3d4c5a 1px, transparent 2px) 2px 4px / 4px 4px repeat-y; width: 6px; height: 14px; margin-right: -3px; }

.toolrow { flex: none; display: flex; height: 25px; }
.bar {
  display: flex;
  align-items: center;
  background: linear-gradient(#e6edf3, #d6e0e9 50%, #a4b4c3);
}
.bar .grip { margin-right: 2px; }
.bar button {
  flex: none;
  width: 23px;
  height: 21px;
  display: flex;
  align-items: center;
  justify-content: center;
  position: relative;
}
.bar button svg { width: 18px; height: 18px; }
.bar .on { border: 1px solid #1d2355; background: #e2e9f1; }
.bar .dots { width: 29px; }
.bar .dots::after {
  content: "";
  position: absolute;
  right: 1px;
  bottom: 0;
  width: 5px;
  height: 1px;
  background: repeating-linear-gradient(90deg, #000 0 1px, transparent 1px 2px);
}
.bar .dots.off::after { opacity: .4; }
.bar .drop { width: 14px; }
.drop::before, .more::before, .combo::before {
  content: "";
  border: 3px solid transparent;
  border-top-color: #000;
  border-bottom: 0;
}
.drop.off::before { border-top-color: #777d82; }
.bar .more { width: 15px; }
.more::before { margin-top: 14px; }
.glyph { font: 700 16px/20px "Liberation Serif", serif; }
.sep {
  flex: none;
  width: 6px;
  height: 15px;
  background: linear-gradient(90deg, transparent 2px, #8799ab 2px 3px, transparent 3px);
}
.math svg { stroke: #5d6266; }

.combo { position: relative; display: flex; height: 18px; background: #fff; }
.combo::before { position: absolute; right: 4px; top: 8px; pointer-events: none; }
.combo select {
  appearance: none;
  width: 100%;
  padding: 0 14px 0 2px;
  border: 1px solid #fff;
  line-height: 16px;
  background: linear-gradient(#b3c2d0, #b3c2d0) right / 12px 100% no-repeat;
}
.zoom { width: 58px; margin-left: 2px; }
.font { width: 134px; margin-left: 3px; }
.size { width: 49px; margin: 0 2px 0 6px; }
.line { width: 80px; margin-left: 3px; }
.line select { background: linear-gradient(#000, #000) 6px 7px / 51px 2px no-repeat, linear-gradient(#b3c2d0, #b3c2d0) right / 12px 100% no-repeat; }
.weight { width: 89px; margin-left: 5px; }
.weight select { padding-left: 28px; background: linear-gradient(#000, #000) 6px 8px / 18px 1px no-repeat, linear-gradient(#b3c2d0, #b3c2d0) right / 12px 100% no-repeat; }

.work { flex: 1; min-height: 0; display: flex; gap: 4px; }
.editor {
  flex: 1;
  min-width: 0;
  display: flex;
  flex-direction: column;
  border: 1px solid #8799ab;
  background: #9fb1bf;
}
.tabs { flex: none; height: 22px; display: flex; background: #d5dee8; }
.slope { width: 18px; height: 20px; margin: 2px 0 0 1px; }
.tab {
  display: flex;
  align-items: center;
  gap: 2px;
  height: 20px;
  margin-top: 2px;
  padding: 1px 8px 0 0;
  border: solid #8799ab;
  border-width: 1px 1px 0 0;
  border-radius: 0 4px 0 0;
  background: linear-gradient(#dfe7ee, #b2c0cd);
  font-weight: 700;
}
.tab svg { width: 16px; height: 16px; }
.tabnav { margin-left: auto; display: flex; align-items: center; gap: 5px; padding-right: 4px; }
.tabnav svg { width: 10px; height: 10px; }

.view {
  flex: 1;
  min-height: 0;
  margin: 4px 4px 5px 3px;
  display: grid;
  grid-template: 22px minmax(0, 1fr) 18px / 22px minmax(0, 1fr) 19px;
  border: solid #8799ab;
  border-width: 1px 0 0 1px;
  background: #d5dee8;
}
.corner button { display: block; width: 16px; height: 16px; margin: 3px; border: 1px solid #8799ab; }
.corner svg { width: 14px; height: 14px; }
.hruler { display: flex; justify-content: center; padding-left: 1px; border-bottom: 1px solid #8799ab; }
.scale { position: relative; display: flex; width: 840px; margin-top: 4px; height: 13px; font: 11px/15px "Liberation Sans", sans-serif; }
.scale div { display: flex; }
.scale span {
  flex: none;
  width: 40px;
  padding-left: 1px;
  text-align: center;
  background: linear-gradient(#8799ab, #8799ab) 0 4px / 1px 4px no-repeat;
}
.scale .out { width: 100px; background: #b7c7d9; }
.scale .left { padding-left: 8px; }
.left span:last-child { width: 12px; }
.scale .in { width: 640px; padding-left: 28px; background: #fff; }
.in span { height: 17px; border-bottom: 4px solid transparent; border-image: linear-gradient(90deg, transparent 20px, #8799ab 20px 21px, transparent 21px) 0 0 4 0; }
.scale .part { width: 8px; border: 0; }
.right span:first-child { width: 28px; padding-right: 10px; background: none; }
.right span:last-child { width: 32px; padding-left: 9px; }
.indent { position: absolute; left: 104px; top: -3px; width: 10px; height: 21px; }
.rindent { position: absolute; right: 102px; top: 5px; width: 10px; height: 9px; }

.vruler {
  overflow: hidden;
  padding: 20px 4px 0;
  border-right: 1px solid #8799ab;
  font: 11px/15px "Liberation Sans", sans-serif;
}
.vout, .vin { width: 13px; display: flex; flex-direction: column; align-items: center; }
.vout { height: 114px; padding-top: 14px; background: #b7c7d9; }
.vin { position: relative; padding-top: 20px; background: #fff; }
.vruler span {
  flex: none;
  width: 13px;
  height: 40px;
  text-align: center;
  writing-mode: vertical-rl;
  transform: rotate(180deg);
  background: linear-gradient(#8799ab, #8799ab) 6px 100% / 4px 1px no-repeat;
}
.vruler .stub { height: 20px; }
.vin b { position: absolute; top: -7px; font-weight: 400; transform: rotate(-90deg); }

.canvas { overflow: hidden; display: flex; justify-content: center; padding: 20px 0 0 2px; background: #a3b3be; }
.page { width: 841px; height: 1188px; border: 1px solid #000; background: #fff; box-shadow: 3px 3px #808080; }
.marks { display: flex; justify-content: space-between; padding: 88px 74px 0; }
.marks i { width: 26px; height: 26px; border: solid #c0c0c0; border-width: 0 1px 1px 0; }
.marks .mr { border-width: 0 0 1px 1px; }
.para { display: flex; align-items: center; margin: 3px 107px; }
.caret { width: 2px; height: 26px; background: #000; }
.para svg { width: 8px; height: 8px; margin-top: 6px; }

.vscroll { grid-column: 3; grid-row: 1 / 3; width: 17px; display: flex; flex-direction: column; background: #f0f0f0; border-left: 1px solid #fff; }
.vscroll button, .hscroll button { width: 16px; height: 17px; display: flex; align-items: center; justify-content: center; }
.split { height: 6px; border: 2px solid #fff; }
.thumb {
  height: 539px;
  border: 1px solid #979797;
  border-radius: 2px;
  background: linear-gradient(#666, #666) 4px 265px / 7px 1px no-repeat, linear-gradient(#666, #666) 4px 268px / 7px 1px no-repeat, linear-gradient(#666, #666) 4px 271px / 7px 1px no-repeat, linear-gradient(90deg, #f3f3f3, #e3e3e4 50%, #cfcfd2);
}
.vscroll .down { margin-top: auto; }
.up::before, .down::before, .back::before, .fwd::before { content: ""; border: 3px solid transparent; }
.up::before { border-bottom-color: #333; border-top: 0; }
.down::before { border-top-color: #333; border-bottom: 0; }
.back::before { border-right-color: #777; border-left: 0; }
.fwd::before { border-left-color: #777; border-right: 0; }
.hscroll { grid-column: 1 / 3; grid-row: 3; display: flex; justify-content: space-between; background: #ededed; border-top: 1px solid #fff; }
.nook { grid-column: 3; grid-row: 3; background: #f0f0f0; }

.panel { flex: none; width: 200px; display: flex; flex-direction: column; }
.panel header {
  flex: none;
  height: 22px;
  display: flex;
  align-items: center;
  gap: 5px;
  padding: 0 1px 0 3px;
  border: 1px solid #8799ab;
  background: #b7c7d9;
}
.panel h2 { flex: 1; }
.panel header svg { width: 10px; height: 10px; }
.pbody {
  flex: 1;
  min-height: 0;
  display: flex;
  flex-direction: column;
  margin-top: 1px;
  padding: 4px 5px 11px 4px;
  border: 1px solid #8799ab;
  background: #e5edf3;
}
.groups { border: solid #8799ab; border-width: 1px 1px 0; }
.groups button { width: 100%; height: 19px; display: flex; align-items: center; text-align: left; padding-top: 1px; border-bottom: 1px solid #8799ab; background: linear-gradient(#e3eaf0, #d3dde6 50%, #a4b5c5); }
.groups i { width: 14px; margin-left: 5px; }
.groups i::before { content: ""; display: block; width: 0; border: 6px solid transparent; border-left-color: #8799ab; border-right: 0; }
.groups .open i::before { border: 6px solid transparent; border-top-color: #8799ab; border-bottom: 0; }
.openrow { display: flex; }
.groups .step { flex: none; width: 20px; border-left: 1px solid #8799ab; background: linear-gradient(#b4c3d1, #a3b3c2); }
.step { display: flex; align-items: center; background: linear-gradient(#b4c3d1, #a3b3c2); }
.step svg { width: 12px; height: 8px; margin: 0 auto; }
.symbols { list-style: none; margin: 7px 5px 0 4px; padding: 0; }
.symbols li { height: 23px; display: flex; align-items: center; gap: 7px; padding: 2px 0 0 3px; border-bottom: 1px solid #8799ab; line-height: 20px; }
.symbols svg { width: 18px; height: 18px; }
.last { width: 21px; height: 20px; margin: auto 0 0 auto; border: 1px solid #8799ab; }
.ptabs { flex: none; height: 26px; display: flex; padding-left: 6px; color: #666; }
.ptabs button { height: 25px; display: flex; align-items: center; gap: 4px; }
.ptabs svg { width: 16px; height: 16px; }
.ptabs .sel { height: 26px; margin: -1px 0 0 6px; padding: 0 6px 0 3px; border: 1px solid #8799ab; border-top: 0; border-radius: 0 0 4px 4px; background: #e5edf3; color: #000; }

.status {
  flex: none;
  position: relative;
  height: 23px;
  display: flex;
  gap: 2px;
  margin-top: 1px;
  padding: 1px 77px 1px 4px;
  line-height: 20px;
  background: linear-gradient(90deg, #b7c7d9, #d5dee8 1000px);
}
.status span { flex: none; border: 1px solid #5d7186; padding: 0 1px; white-space: nowrap; overflow: hidden; }
.status .msg { flex: 1; }
.status .pages { width: 134px; padding-left: 5px; }
.status .pos { width: 354px; display: flex; gap: 22px; }
.status .auto { width: 54px; }
.status .caps { width: 28px; color: #8b96a1; }
.status .num { width: 30px; }
.langbar { position: absolute; right: 0; bottom: 0; width: 79px; height: 26px; border-top: 1px solid #ddd; background: linear-gradient(#80868b, #64696e 50%, #85898c); }
.langbar svg { width: 80px; height: 26px; }

.taskbar { flex: none; height: 7px; display: flex; overflow: hidden; border-top: 1px solid #173a58; background: linear-gradient(90deg, #1a5b93, #3596cf 160px, #4aa5d8 560px, #3a92cc 1000px, #1d66ae 1400px, #0e3d78); }
.start { width: 30px; height: 8px; margin: 1px 17px 0 12px; }
.tasks { flex: 1; display: flex; gap: 4px; }
.tasks i { width: 58px; display: flex; justify-content: center; }
.tasks svg { height: 8px; }
.tasks .lit { border: 1px solid #cfe7f4; border-bottom: 0; background: #7cbbe0; outline: 1px solid #143f60; }
.tasks .t2 { width: 122px; }
.tasks .cur { background: #d3ebf8; }
.taskbar time { flex: none; width: 60px; color: #fff; line-height: 14px; margin-top: 2px; }
.peek { flex: none; width: 14px; border: 1px solid #8aa; background: #3c5468; }
```
